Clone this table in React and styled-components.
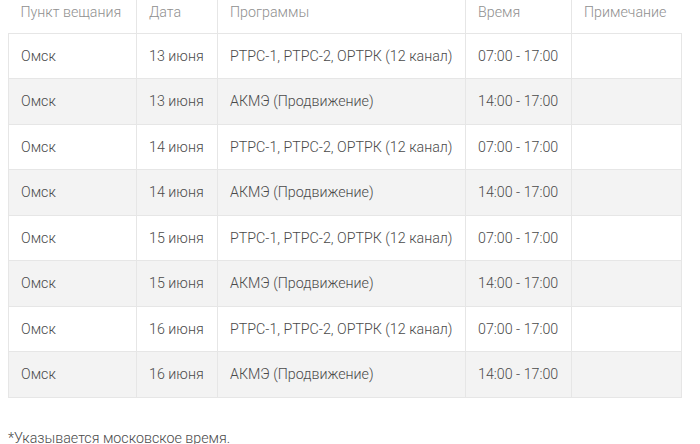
import React from 'react'
import styled, { createGlobalStyle } from 'styled-components'

const GlobalStyle = createGlobalStyle`
  body {
    margin: 0;
    background: #ffffff;
    font-family: Roboto, "Liberation Sans", sans-serif;
  }
`

const rows = [
  { city: 'Омск', date: '13 июня', programs: 'РТРС-1, РТРС-2, ОРТРК (12 канал)', time: '07:00 - 17:00' },
  { city: 'Омск', date: '13 июня', programs: 'АКМЭ (Продвижение)', time: '14:00 - 17:00' },
  { city: 'Омск', date: '14 июня', programs: 'РТРС-1, РТРС-2, ОРТРК (12 канал)', time: '07:00 - 17:00' },
  { city: 'Омск', date: '14 июня', programs: 'АКМЭ (Продвижение)', time: '14:00 - 17:00' },
  { city: 'Омск', date: '15 июня', programs: 'РТРС-1, РТРС-2, ОРТРК (12 канал)', time: '07:00 - 17:00' },
  { city: 'Омск', date: '15 июня', programs: 'АКМЭ (Продвижение)', time: '14:00 - 17:00' },
  { city: 'Омск', date: '16 июня', programs: 'РТРС-1, РТРС-2, ОРТРК (12 канал)', time: '07:00 - 17:00' },
  { city: 'Омск', date: '16 июня', programs: 'АКМЭ (Продвижение)', time: '14:00 - 17:00' },
]

function App() {
  return (
    <PageStyled>
      <GlobalStyle />
      <Table>
        <colgroup>
          <col style={{ width: 128 }} />
          <col style={{ width: 81 }} />
          <col style={{ width: 248 }} />
          <col style={{ width: 106 }} />
          <col style={{ width: 110 }} />
        </colgroup>
        <thead>
          <tr>
            <HeadCell>Пункт вещания</HeadCell>
            <HeadCell>Дата</HeadCell>
            <HeadCell>Программы</HeadCell>
            <HeadCell>Время</HeadCell>
            <HeadCell>Примечание</HeadCell>
          </tr>
        </thead>
        <tbody>
          {rows.map((row, i) => (
            <Row key={i} $striped={i % 2 === 1}>
              <Cell>{row.city}</Cell>
              <Cell>{row.date}</Cell>
              <Cell>{row.programs}</Cell>
              <Cell>{row.time}</Cell>
              <Cell></Cell>
            </Row>
          ))}
        </tbody>
      </Table>
      <Note>*Указывается московское время.</Note>
    </PageStyled>
  )
}

const PageStyled = styled.div`
  padding: 0 8px;
  width: 700px;
  box-sizing: border-box;
`

const Table = styled.table`
  width: 673px;
  border-collapse: collapse;
  table-layout: fixed;
  font-size: 14.25px;
  font-weight: 300;
`

const HeadCell = styled.th`
  height: 33px;
  box-sizing: border-box;
  padding: 0 12px 8px;
  text-align: left;
  font-weight: 300;
  color: #8f8f8f;
  border-right: 1px solid #e6e6e6;
  border-left: 1px solid #e6e6e6;
  border-bottom: 1px solid #e6e6e6;
  white-space: nowrap;
  &:first-child { border-left: none; }
  &:last-child { border-right: none; }
`

const Row = styled.tr`
  background: ${p => (p.$striped ? '#f3f3f3' : '#ffffff')};
`

const Cell = styled.td`
  height: 45.5px;
  box-sizing: border-box;
  padding: 0 12px;
  color: #4a4a4a;
  border: 1px solid #e6e6e6;
  white-space: nowrap;
`

const Note = styled.p`
  margin: 32px 0 0;
  font-size: 14.25px;
  font-weight: 300;
  color: #4a4a4a;
`

export default App
